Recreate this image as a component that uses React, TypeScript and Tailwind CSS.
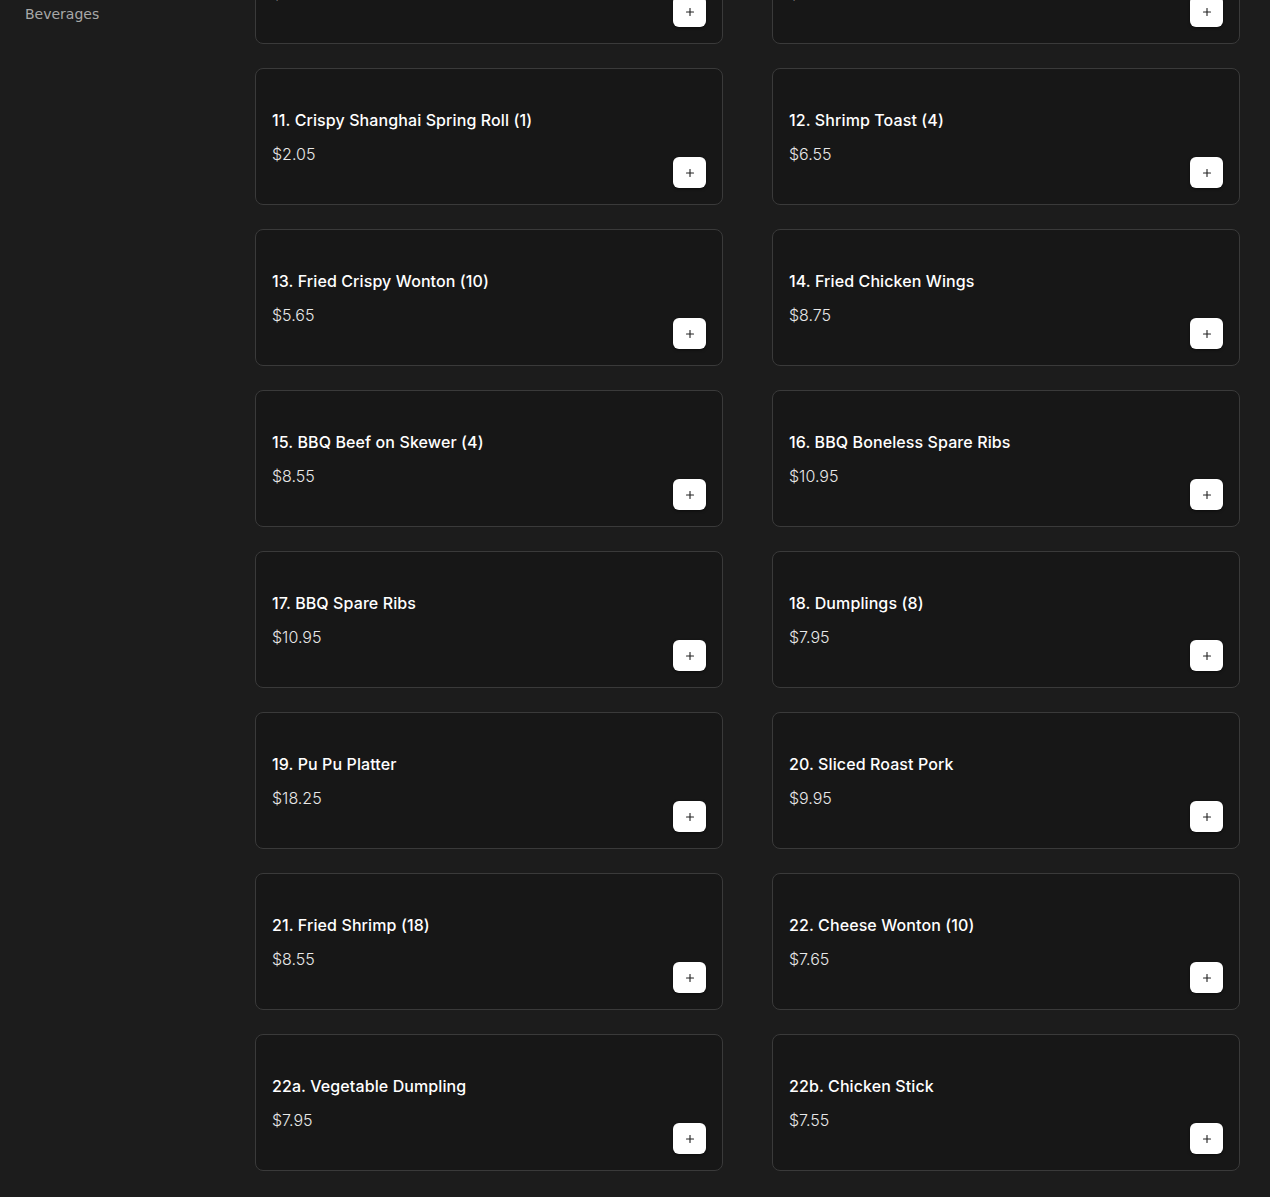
import { Plus } from "lucide-react";

type Item = { name: string; price: string };

const items: Item[] = [
  { name: "9. Egg Roll (1)", price: "$2.05" },
  { name: "10. Spring Roll (1)", price: "$2.05" },
  { name: "11. Crispy Shanghai Spring Roll (1)", price: "$2.05" },
  { name: "12. Shrimp Toast (4)", price: "$6.55" },
  { name: "13. Fried Crispy Wonton (10)", price: "$5.65" },
  { name: "14. Fried Chicken Wings", price: "$8.75" },
  { name: "15. BBQ Beef on Skewer (4)", price: "$8.55" },
  { name: "16. BBQ Boneless Spare Ribs", price: "$10.95" },
  { name: "17. BBQ Spare Ribs", price: "$10.95" },
  { name: "18. Dumplings (8)", price: "$7.95" },
  { name: "19. Pu Pu Platter", price: "$18.25" },
  { name: "20. Sliced Roast Pork", price: "$9.95" },
  { name: "21. Fried Shrimp (18)", price: "$8.55" },
  { name: "22. Cheese Wonton (10)", price: "$7.65" },
  { name: "22a. Vegetable Dumpling", price: "$7.95" },
  { name: "22b. Chicken Stick", price: "$7.55" },
];

function MenuCard({ item }: { item: Item }) {
  return (
    <div className="h-[137px] rounded-lg border border-[#3a3a3a] bg-[#171717] pl-4 pr-4 pb-4 flex justify-between items-end">
      <div className="self-start pt-[39px]">
        <p className="text-[16px] leading-6 font-medium text-white tracking-[0.1px]">
          {item.name}
        </p>
        <p className="mt-[10px] text-[16px] leading-6 font-light text-[#e8e8e8]">
          {item.price}
        </p>
      </div>
      <button className="w-[33px] h-[31px] rounded-md bg-white flex items-center justify-center shadow-[0_1px_3px_rgba(0,0,0,0.5)]">
        <Plus className="w-3 h-3 text-[#222]" strokeWidth={2.25} />
      </button>
    </div>
  );
}

export default function App() {
  return (
    <div className="min-h-screen bg-[#1c1c1c] flex overflow-hidden" style={{ fontFamily: "Inter, 'Noto Sans', sans-serif" }}>
      {/* Sidebar */}
      <aside className="w-[255px] shrink-0 pl-[25px]">
        <p className="text-[14px] leading-[28px] text-[#a8a8a8] font-['DejaVu_Sans',sans-serif]">
          Beverages
        </p>
      </aside>

      {/* Menu grid, scrolled */}
      <main className="w-[985px] -mt-[93px] pb-[26px]">
        <div className="grid grid-cols-2 gap-x-[49px] gap-y-[24px]">
          {items.map((item) => (
            <MenuCard key={item.name} item={item} />
          ))}
        </div>
      </main>
    </div>
  );
}
